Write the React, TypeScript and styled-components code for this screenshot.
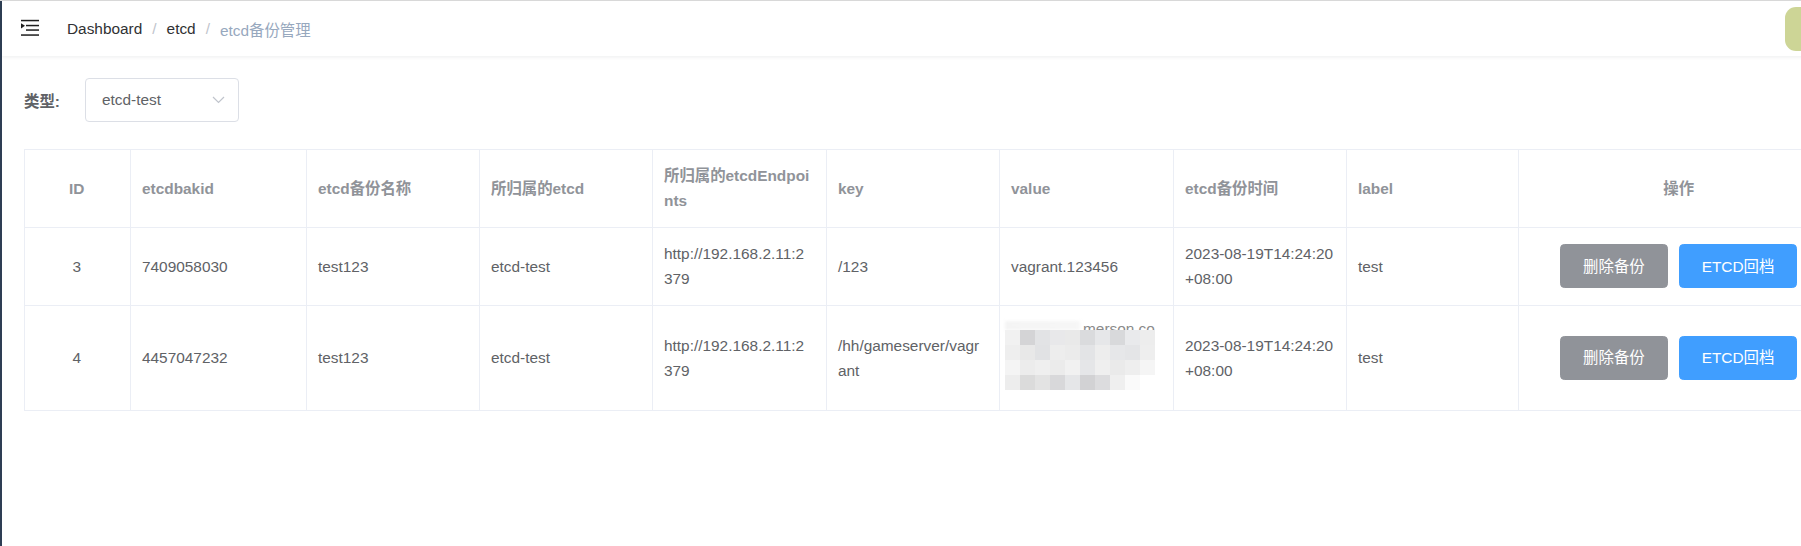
import React from 'react';
import styled, { createGlobalStyle } from 'styled-components';

type Row = {
  id: number;
  bakId: string;
  name: string;
  etcd: string;
  endpoints: string;
  key: string;
  value: string | null;
  time: string;
  label: string;
};

const rows: Row[] = [
  {
    id: 3,
    bakId: '7409058030',
    name: 'test123',
    etcd: 'etcd-test',
    endpoints: 'http://192.168.2.11:2\n379',
    key: '/123',
    value: 'vagrant.123456',
    time: '2023-08-19T14:24:20\n+08:00',
    label: 'test',
  },
  {
    id: 4,
    bakId: '4457047232',
    name: 'test123',
    etcd: 'etcd-test',
    endpoints: 'http://192.168.2.11:2\n379',
    key: '/hh/gameserver/vagr\nant',
    value: null,
    time: '2023-08-19T14:24:20\n+08:00',
    label: 'test',
  },
];

const widths = [106, 176, 173, 173, 174, 173, 174, 173, 172, 322];

// pixelated (redacted) value, one row of tiles per line
const mosaic = [
  ['#f1f1f1', '#d4d4d6', '#e2e3e5', '#e8e8ea', '#e9e9e9', '#dadbdd', '#e6e7e9', '#d8d9db', '#e9eaec', '#ededed'],
  ['#eeeeee', '#e8e8e8', '#e1e2e4', '#ededed', '#ebebeb', '#e3e4e6', '#ededed', '#e6e7e9', '#e4e5e7', '#eeeeee'],
  ['#f4f4f4', '#ececec', '#efefef', '#ebebeb', '#f1f1f1', '#e5e6e8', '#efefef', '#eaeaea', '#eeeeee', '#f5f5f5'],
  ['#ededed', '#dbdbdb', '#e3e3e3', '#d8d8da', '#e5e6e8', '#d2d2d4', '#dcdcde', '#efefef', '#fafafa', '#ffffff'],
];

function App() {
  return (
    <>
      <GlobalStyle />
      <Page>
        <Sidebar />
        <Main>
          <Navbar>
            <Hamburger>
              <svg width="18" height="17" viewBox="0 0 18 17">
                <rect x="0" y="0.8" width="18" height="1.5" fill="#1f1f1f" />
                <rect x="5" y="5.8" width="13" height="1.5" fill="#1f1f1f" />
                <rect x="5" y="10.3" width="13" height="1.5" fill="#1f1f1f" />
                <rect x="0" y="15.3" width="18" height="1.5" fill="#1f1f1f" />
                <polygon points="0,4.2 4,6.8 0,9.4" fill="#1f1f1f" />
              </svg>
            </Hamburger>
            <Breadcrumb>
              <Crumb>Dashboard</Crumb>
              <Sep>/</Sep>
              <Crumb>etcd</Crumb>
              <Sep>/</Sep>
              <Crumb $current>etcd备份管理</Crumb>
            </Breadcrumb>
            <RightMenu>
              <Avatar>
                <svg width="44" height="44" viewBox="0 0 44 44">
                  <ellipse cx="30" cy="26" rx="8" ry="12" fill="#f4f1dc" />
                  <circle cx="27" cy="27" r="1.6" fill="#d99a8a" />
                </svg>
              </Avatar>
            </RightMenu>
          </Navbar>

          <Content>
            <FilterRow>
              <FormLabel>类型:</FormLabel>
              <Select>
                <span>etcd-test</span>
                <svg width="13" height="8" viewBox="0 0 13 8">
                  <path d="M1 1 L6.5 6.5 L12 1" fill="none" stroke="#c0c4cc" strokeWidth="1.2" />
                </svg>
              </Select>
            </FilterRow>

            <Table>
              <colgroup>
                {widths.map((w, i) => (
                  <col key={i} style={{ width: w }} />
                ))}
              </colgroup>
              <thead>
                <tr>
                  <Th $center>ID</Th>
                  <Th>etcdbakid</Th>
                  <Th>etcd备份名称</Th>
                  <Th>所归属的etcd</Th>
                  <Th>{'所归属的etcdEndpoi\nnts'}</Th>
                  <Th>key</Th>
                  <Th>value</Th>
                  <Th>etcd备份时间</Th>
                  <Th>label</Th>
                  <Th $center>操作</Th>
                </tr>
              </thead>
              <tbody>
                {rows.map((r) => (
                  <tr key={r.id}>
                    <Td $center>{r.id}</Td>
                    <Td>{r.bakId}</Td>
                    <Td>{r.name}</Td>
                    <Td>{r.etcd}</Td>
                    <Td>{r.endpoints}</Td>
                    <Td>{r.key}</Td>
                    <Td>
                      {r.value ?? (
                        <Mosaic>
                          <MosaicText>merson.co</MosaicText>
                          <MosaicHaze />
                          <MosaicGrid>
                            {mosaic.flat().map((c, i) => (
                              <Tile key={i} $c={c} />
                            ))}
                          </MosaicGrid>
                        </Mosaic>
                      )}
                    </Td>
                    <Td>{r.time}</Td>
                    <Td>{r.label}</Td>
                    <Td $center>
                      <Actions>
                        <Button $kind="info">删除备份</Button>
                        <Button $kind="primary">ETCD回档</Button>
                      </Actions>
                    </Td>
                  </tr>
                ))}
              </tbody>
            </Table>
          </Content>
        </Main>
      </Page>
    </>
  );
}

const GlobalStyle = createGlobalStyle`
  html, body {
    margin: 0;
    padding: 0;
    background: #fff;
    overflow: hidden;
  }
  body {
    font-family: "Liberation Sans", Arial, "Noto Sans CJK SC", sans-serif;
  }
`;

const Page = styled.div`
  display: flex;
  height: 100vh;
  box-sizing: border-box;
  border-top: 1px solid #dcdcdc;
`;

const Sidebar = styled.div`
  flex: none;
  width: 2px;
  background: #2e3e54;
`;

const Main = styled.div`
  flex: none;
  width: 1860px;
`;

const Navbar = styled.div`
  display: flex;
  align-items: center;
  height: 55px;
  background: #fff;
  box-shadow: 0 1px 4px rgba(0, 21, 41, 0.08);
`;

const Hamburger = styled.div`
  display: flex;
  padding-left: 19px;
  margin-bottom: 3px;
`;

const Breadcrumb = styled.div`
  display: flex;
  align-items: center;
  margin-left: 28px;
  font-size: 15.4px;
`;

const Crumb = styled.span<{ $current?: boolean }>`
  color: ${(p) => (p.$current ? '#97a8be' : '#303133')};
`;

const Sep = styled.span`
  margin: 0 10px;
  color: #c0c4cc;
`;

const RightMenu = styled.div`
  margin-left: auto;
  margin-right: 33px;
  display: flex;
  align-items: center;
`;

const Avatar = styled.div`
  width: 44px;
  height: 44px;
  border-radius: 11px;
  overflow: hidden;
  background: #cdd596;
  svg {
    display: block;
  }
`;

const Content = styled.div`
  padding: 22px;
`;

const FilterRow = styled.div`
  display: flex;
  align-items: center;
  height: 44px;
  margin-bottom: 27px;
`;

const FormLabel = styled.label`
  width: 61px;
  font-size: 15.4px;
  font-weight: 700;
  color: #606266;
`;

const Select = styled.div`
  box-sizing: border-box;
  display: flex;
  align-items: center;
  justify-content: space-between;
  width: 154px;
  height: 44px;
  padding: 0 13px 0 16px;
  border: 1px solid #dcdfe6;
  border-radius: 4px;
  font-size: 15.4px;
  color: #606266;
`;

const Table = styled.table`
  width: 1816px;
  table-layout: fixed;
  border-collapse: collapse;
  font-size: 15.4px;
  line-height: 25.3px;
  color: #606266;
`;

const cellBase = `
  padding: 13.2px 12.5px 13.2px 11px;
  border: 1px solid #ebeef5;
  vertical-align: middle;
  white-space: pre-line;
  word-break: break-all;
`;

const Th = styled.th<{ $center?: boolean }>`
  ${cellBase}
  text-align: ${(p) => (p.$center ? 'center' : 'left')};
  font-weight: 700;
  color: #909399;
`;

const Td = styled.td<{ $center?: boolean }>`
  ${cellBase}
  text-align: ${(p) => (p.$center ? 'center' : 'left')};
`;

const Mosaic = styled.div`
  position: relative;
  height: 76px;
  margin-left: -6px;
`;

const MosaicText = styled.div`
  position: absolute;
  top: -2px;
  left: 78px;
  font-size: 15.4px;
  line-height: 20px;
  color: #8a8a8a;
  white-space: nowrap;
`;

const MosaicHaze = styled.div`
  position: relative;
  height: 9px;
  margin-top: 2px;
  width: 150px;
  background: linear-gradient(90deg, #f4f4f4 0%, #f6f6f6 48%, rgba(255, 255, 255, 0) 52%);
  filter: blur(1.5px);
`;

const MosaicGrid = styled.div`
  position: relative;
  display: grid;
  grid-template-columns: repeat(10, 15px);
  grid-auto-rows: 15px;
  filter: blur(0.6px);
`;

const Tile = styled.div<{ $c: string }>`
  background: ${(p) => p.$c};
`;

const Actions = styled.div`
  display: flex;
  justify-content: center;
  gap: 11px;
`;

const Button = styled.button<{ $kind: 'info' | 'primary' }>`
  height: 44px;
  padding: 0 22px;
  border: 1px solid ${(p) => (p.$kind === 'info' ? '#909399' : '#409eff')};
  border-radius: 4.4px;
  background: ${(p) => (p.$kind === 'info' ? '#909399' : '#409eff')};
  color: #fff;
  font-family: inherit;
  font-size: 15.4px;
  line-height: 1;
  cursor: pointer;
`;

export default App;
